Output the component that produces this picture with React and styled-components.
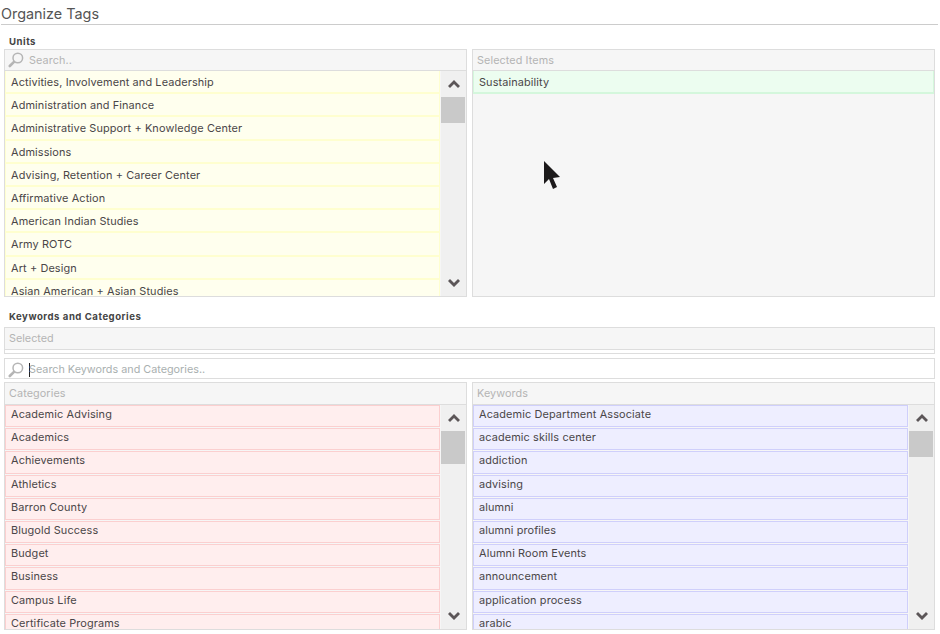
import React from 'react';
import styled, { createGlobalStyle } from 'styled-components';

const GlobalStyle = createGlobalStyle`
  html, body {
    margin: 0;
    padding: 0;
    background: #fff;
    font-family: Inter, "Open Sans", sans-serif;
    color: #4a4648;
    overflow: hidden;
  }
`;

const Page = styled.div`
  position: relative;
  width: 940px;
  height: 634px;
  overflow: hidden;
  padding: 5px 2px 0 1px;
  box-sizing: border-box;
`;

const Title = styled.h1`
  margin: 0;
  height: 19px;
  font-size: 14.4px;
  line-height: 18px;
  font-weight: 400;
  color: #555;
  border-bottom: 1px solid #ccc;
`;

const Section = styled.section`
  padding: 0 3px 0 3px;
`;

const SectionLabel = styled.div`
  height: ${p => p.$height}px;
  box-sizing: border-box;
  padding: ${p => p.$top}px 0 0 5px;
  font-size: 9.6px;
  letter-spacing: 0.52px;
  line-height: 12px;
  font-weight: 700;
  color: #444;
`;

const Columns = styled.div`
  display: grid;
  grid-template-columns: 463px 463px;
  gap: 5px;
`;

const Panel = styled.div`
  height: 248px;
  box-sizing: border-box;
  border: 1px solid #ddd;
  background: #f6f6f6;
  display: flex;
  flex-direction: column;
  overflow: hidden;
`;

const PanelHeader = styled.div`
  flex: none;
  height: ${p => p.$height || 20}px;
  border-bottom: 1px solid #ddd;
  display: flex;
  align-items: center;
  padding-left: 4px;
  font-size: 10.8px;
  letter-spacing: 0.1px;
  color: #b4b4b4;
`;

const SearchHeader = styled(PanelHeader)`
  gap: 5px;
  padding-left: 3px;
`;

const PanelBody = styled.div`
  flex: 1;
  min-height: 0;
  display: flex;
`;

const List = styled.div`
  flex: 1;
  min-width: 0;
  overflow: hidden;
`;

const Row = styled.div`
  height: 21.2px;
  border: 1px solid ${p => p.$border};
  border-width: 0 1px 2px 1px;
  background: ${p => p.$bg};
  padding-left: 5px;
  font-size: 10.9px;
  letter-spacing: 0.12px;
  line-height: 23px;
  color: #4a4648;
  white-space: nowrap;
`;

const BoxRow = styled(Row)`
  border-width: 1px;
  margin-bottom: 1px;
  height: 20.2px;
  line-height: 17.6px;
`;

const Scrollbar = styled.div`
  flex: none;
  width: 25px;
  margin-left: 1px;
  display: flex;
  flex-direction: column;
  align-items: stretch;
  background: #f0f0f0;
`;

const ArrowSlot = styled.div`
  height: 26px;
  flex: none;
  display: flex;
  align-items: center;
  justify-content: center;
  margin-top: ${p => (p.$bottom ? 'auto' : '0')};
`;

const Thumb = styled.div`
  height: ${p => p.$height}px;
  width: 24px;
  background: #c9c9c9;
`;

const SelectedBox = styled.div`
  height: 27px;
  box-sizing: border-box;
  border: 1px solid #ddd;
`;

const SelectedHead = styled.div`
  height: 21px;
  background: #f6f6f6;
  border-bottom: 1px solid #ddd;
  padding-left: 4px;
  font-size: 10.8px;
  line-height: 21px;
  color: #b4b4b4;
`;

const SearchBar = styled.div`
  margin-top: 4px;
  height: 16px;
  padding: 3px 0 0 3px;
  border: 1px solid #ddd;
  background: #fff;
  display: flex;
  align-items: center;
  gap: 5px;
  font-size: 10.8px;
  color: #a9b0b0;
`;

const Caret = styled.span`
  display: inline-block;
  width: 1px;
  height: 14px;
  margin-right: -1px;
  background: #222;
  vertical-align: middle;
`;

const Stack = styled.div`
  margin-top: 3px;
`;

const Pointer = styled.svg`
  position: absolute;
  left: 543px;
  top: 160px;
  width: 20px;
  height: 33px;
`;

const units = [
  'Activities, Involvement and Leadership',
  'Administration and Finance',
  'Administrative Support + Knowledge Center',
  'Admissions',
  'Advising, Retention + Career Center',
  'Affirmative Action',
  'American Indian Studies',
  'Army ROTC',
  'Art + Design',
  'Asian American + Asian Studies',
];

const categories = [
  'Academic Advising',
  'Academics',
  'Achievements',
  'Athletics',
  'Barron County',
  'Blugold Success',
  'Budget',
  'Business',
  'Campus Life',
  'Certificate Programs',
];

const keywords = [
  'Academic Department Associate',
  'academic skills center',
  'addiction',
  'advising',
  'alumni',
  'alumni profiles',
  'Alumni Room Events',
  'announcement',
  'application process',
  'arabic',
];

const Magnifier = () => (
  <svg width="16" height="16" viewBox="0 0 16 16" fill="none">
    <circle cx="9.8" cy="6" r="4.8" stroke="#b5b5b5" strokeWidth="1.5" />
    <path d="M6 9.8 L1.8 14" stroke="#b5b5b5" strokeWidth="2.6" strokeLinecap="round" />
  </svg>
);

const Chevron = ({ down }) => (
  <svg width="12" height="8" viewBox="0 0 12 8">
    <path
      d={down ? 'M0 2 L2 0 L6 4 L10 0 L12 2 L6 8 Z' : 'M0 6 L2 8 L6 4 L10 8 L12 6 L6 0 Z'}
      fill="#5c5658"
    />
  </svg>
);

const ScrollTrack = ({ thumb }) => (
  <Scrollbar>
    <ArrowSlot>
      <Chevron />
    </ArrowSlot>
    <Thumb $height={thumb} />
    <ArrowSlot $bottom>
      <Chevron down />
    </ArrowSlot>
  </Scrollbar>
);

export default function App() {
  return (
    <Page>
      <GlobalStyle />
      <Title>Organize Tags</Title>
      <Section>
        <SectionLabel $height={24} $top={11}>Units</SectionLabel>
        <Columns>
          <Panel>
            <SearchHeader>
              <Magnifier />
              Search..
            </SearchHeader>
            <PanelBody>
              <List>
                {units.map(name => (
                  <Row key={name} $bg="#ffffee" $border="#ffffcf">
                    {name}
                  </Row>
                ))}
              </List>
              <ScrollTrack thumb={26} />
            </PanelBody>
          </Panel>
          <Panel>
            <PanelHeader>Selected Items</PanelHeader>
            <PanelBody>
              <List>
                <Row $bg="#ecfdf0" $border="#d4f7dc">
                  Sustainability
                </Row>
              </List>
            </PanelBody>
          </Panel>
        </Columns>
        <SectionLabel $height={27} $top={14}>Keywords and Categories</SectionLabel>
        <Stack>
          <SelectedBox>
            <SelectedHead>Selected</SelectedHead>
          </SelectedBox>
          <SearchBar>
            <Magnifier />
            <span>
              <Caret />
              Search Keywords and Categories..
            </span>
          </SearchBar>
        </Stack>
        <Stack>
          <Columns>
            <Panel>
              <PanelHeader $height={21}>Categories</PanelHeader>
              <PanelBody>
                <List>
                  {categories.map(name => (
                    <BoxRow key={name} $bg="#ffeeee" $border="#fbcfcf">
                      {name}
                    </BoxRow>
                  ))}
                </List>
                <ScrollTrack thumb={33} />
              </PanelBody>
            </Panel>
            <Panel>
              <PanelHeader $height={21}>Keywords</PanelHeader>
              <PanelBody>
                <List>
                  {keywords.map(name => (
                    <BoxRow key={name} $bg="#eeeeff" $border="#cfcffb">
                      {name}
                    </BoxRow>
                  ))}
                </List>
                <ScrollTrack thumb={26} />
              </PanelBody>
            </Panel>
          </Columns>
        </Stack>
      </Section>
      <Pointer viewBox="0 0 20 33">
        <path d="M1 1 L1 24 L6 19 L10 29 L14 27 L10 18 L17 17 Z" fill="#1c1a1b" />
      </Pointer>
    </Page>
  );
}
